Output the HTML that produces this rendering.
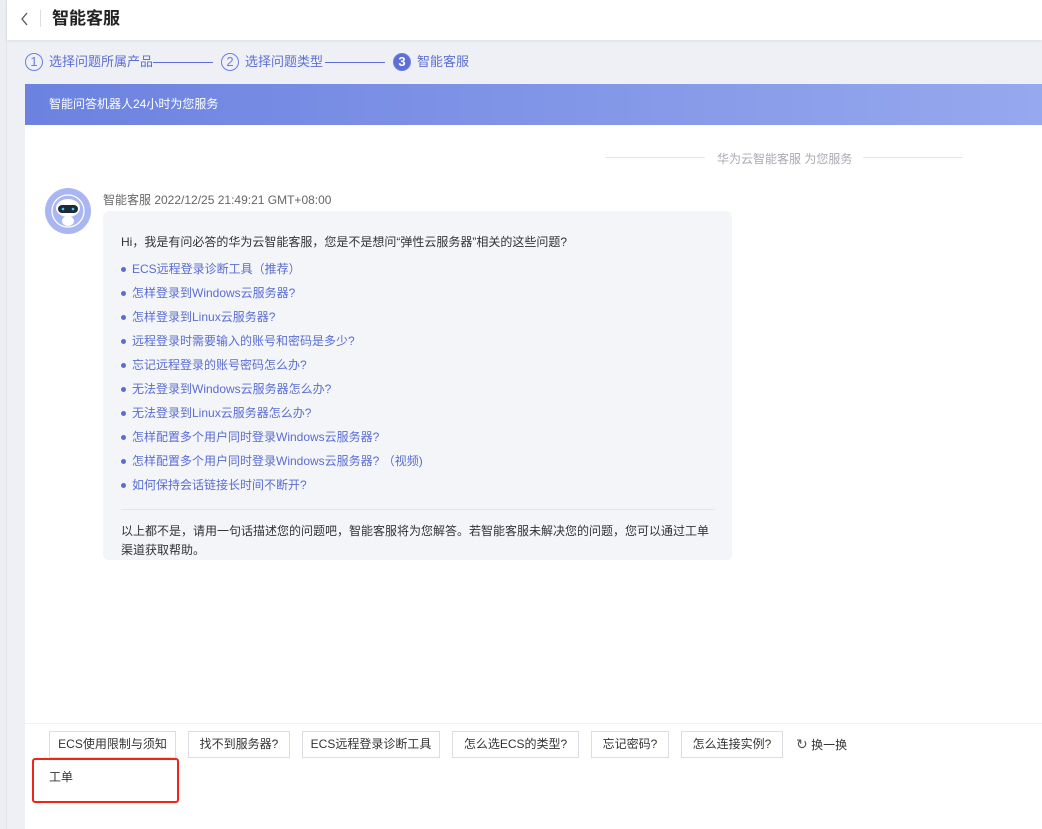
<!DOCTYPE html>
<html><head><meta charset="utf-8"><style>
*{margin:0;padding:0;box-sizing:border-box}
body{width:1042px;height:829px;overflow:hidden;background:#eff0f5;font-family:"Liberation Sans","Noto Sans CJK SC",sans-serif;position:relative;color:#333}
.abs{position:absolute}
.left{left:0;top:0;width:7px;height:829px;background:#eceef3;border-right:1px solid #e2e4ea}
.hdr{left:7px;top:0;width:1035px;height:40px;background:#fff;box-shadow:0 1px 3px rgba(0,0,0,.08)}
.step{font-size:13px;color:#5d6fd4;top:53px;height:18px;line-height:18px}
.circ{display:inline-block;width:18px;height:18px;border:1px solid #6d7fdc;border-radius:50%;text-align:center;line-height:16px;font-size:13px;vertical-align:top;margin-right:6px;color:#6d7fdc}
.line{top:62px;height:1px;background:#5d6fd4}
.banner{left:25px;top:84px;width:1017px;height:41px;background:linear-gradient(90deg,#6b82e0,#96a8ee);color:#fff;font-size:12px;line-height:41px;padding-left:24px}
.main{left:25px;top:125px;width:1017px;height:704px;background:#fff}
.link{font-size:12px;color:#5a6dd2;height:24px;line-height:24px;padding-left:11px;position:relative}
.link:before{content:"";position:absolute;left:0;top:10px;width:5px;height:5px;border-radius:50%;background:#5a6dd2}
.btn{top:731px;height:27px;border:1px solid #dcdde2;background:#fff;font-size:12px;line-height:25px;text-align:center;color:#333}
</style></head><body>
<div class="abs left"></div>
<div class="abs hdr">
 <svg class="abs" style="left:13px;top:11px" width="10" height="16" viewBox="0 0 10 16"><path d="M7 2L2 8l5 6" fill="none" stroke="#555" stroke-width="1.3"/></svg>
 <div class="abs" style="left:33px;top:10px;width:1px;height:17px;background:#ddd"></div>
 <div class="abs" style="left:45px;top:7px;font-size:17px;font-weight:bold;color:#222;line-height:24px">智能客服</div>
</div>
<div class="abs step" style="left:25px"><span class="circ">1</span>选择问题所属产品</div>
<div class="abs line" style="left:153px;width:60px"></div>
<div class="abs step" style="left:221px"><span class="circ">2</span>选择问题类型</div>
<div class="abs line" style="left:325px;width:60px"></div>
<div class="abs step" style="left:393px"><span class="circ" style="background:#5d6fd4;color:#fff;font-weight:bold">3</span>智能客服</div>
<div class="abs banner">智能问答机器人24小时为您服务</div>
<div class="abs main"></div>
<div class="abs" style="left:605px;top:157px;width:100px;height:1px;background:#e6e7ec"></div>
<div class="abs" style="left:717px;top:150px;font-size:12px;color:#a8aab2">华为云智能客服 为您服务</div>
<div class="abs" style="left:863px;top:157px;width:100px;height:1px;background:#e6e7ec"></div>
<svg class="abs" style="left:45px;top:188px" width="46" height="46" viewBox="0 0 46 46">
<circle cx="23" cy="23" r="23" fill="#aab6f2"/>
<circle cx="23" cy="23" r="16" fill="none" stroke="#fff" stroke-width="1.3"/>
<ellipse cx="23" cy="20" rx="12" ry="9" fill="#fff"/>
<rect x="13" y="17" width="20" height="8" rx="4" fill="#1d2a3c"/>
<circle cx="18" cy="21" r="1.3" fill="#3cd0e8"/><circle cx="28" cy="21" r="1.3" fill="#3cd0e8"/>
<ellipse cx="23" cy="33" rx="6" ry="5" fill="#fff"/>
</svg>
<div class="abs" style="left:103px;top:191px;font-size:12px;color:#666">智能客服 2022/12/25 21:49:21 GMT+08:00</div>
<div class="abs" style="left:103px;top:211px;width:629px;height:349px;background:#f4f5f9;border-radius:6px;padding:19px 17px 0 18px">
 <div style="font-size:12px;line-height:24px;color:#333;margin-bottom:3px">Hi，我是有问必答的华为云智能客服，您是不是想问“弹性云服务器”相关的这些问题?</div>
 <div class="link">ECS远程登录诊断工具（推荐）</div>
 <div class="link">怎样登录到Windows云服务器?</div>
 <div class="link">怎样登录到Linux云服务器?</div>
 <div class="link">远程登录时需要输入的账号和密码是多少?</div>
 <div class="link">忘记远程登录的账号密码怎么办?</div>
 <div class="link">无法登录到Windows云服务器怎么办?</div>
 <div class="link">无法登录到Linux云服务器怎么办?</div>
 <div class="link">怎样配置多个用户同时登录Windows云服务器?</div>
 <div class="link">怎样配置多个用户同时登录Windows云服务器? （视频)</div>
 <div class="link">如何保持会话链接长时间不断开?</div>
 <div style="height:1px;background:#e3e4ea;margin:12px 0 12px"></div>
 <div style="font-size:12px;line-height:19px;color:#333">以上都不是，请用一句话描述您的问题吧，智能客服将为您解答。若智能客服未解决您的问题，您可以通过工单渠道获取帮助。</div>
</div>
<div class="abs" style="left:25px;top:723px;width:1017px;height:1px;background:#f2f3f5"></div>
<div class="abs btn" style="left:49px;width:127px">ECS使用限制与须知</div>
<div class="abs btn" style="left:188px;width:102px">找不到服务器?</div>
<div class="abs btn" style="left:302px;width:138px">ECS远程登录诊断工具</div>
<div class="abs btn" style="left:452px;width:127px">怎么选ECS的类型?</div>
<div class="abs btn" style="left:591px;width:78px">忘记密码?</div>
<div class="abs btn" style="left:681px;width:102px">怎么连接实例?</div>
<div class="abs" style="left:796px;top:736px;font-size:12px;color:#333;line-height:17px"><span style="font-size:14px;color:#555">↻</span> 换一换</div>
<div class="abs" style="left:32px;top:758px;width:147px;height:45px;border:2px solid #f0241b;border-radius:3px"></div>
<div class="abs" style="left:49px;top:768px;font-size:12px;color:#333">工单</div>
</body></html>
